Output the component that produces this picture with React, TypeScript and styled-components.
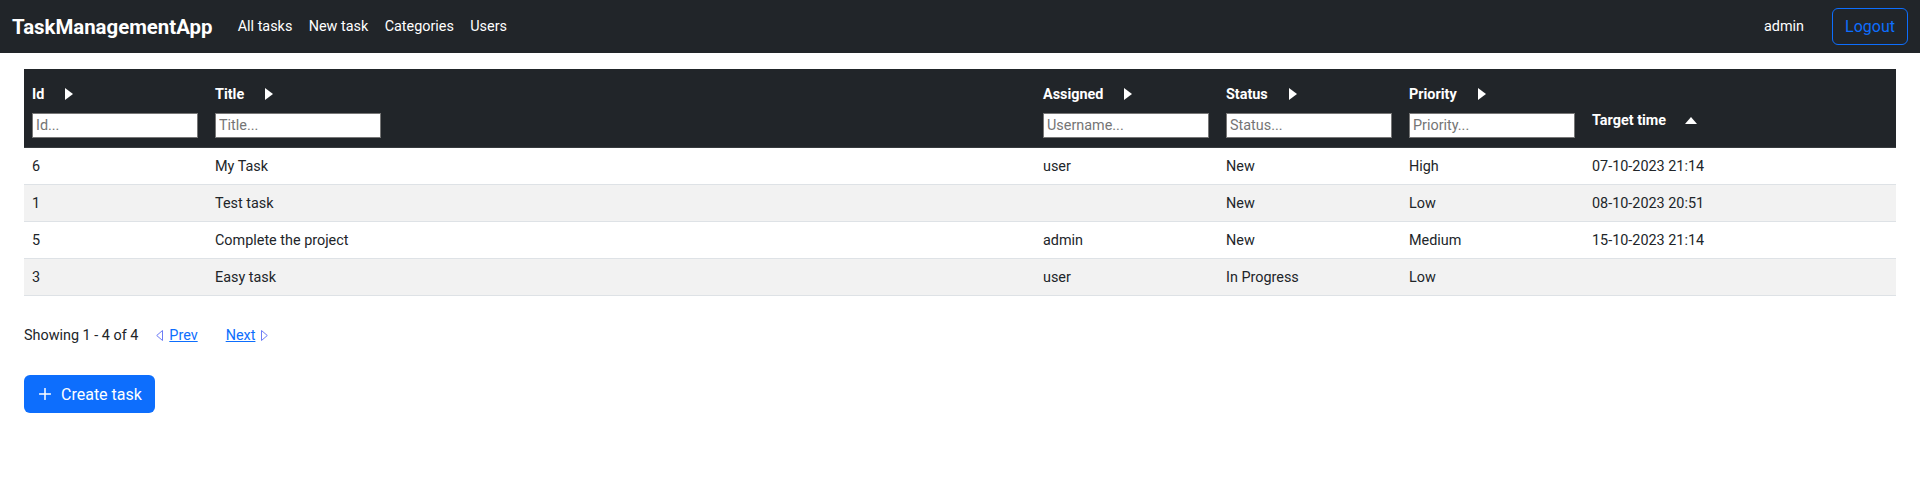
import React from "react";
import styled, { createGlobalStyle } from "styled-components";

const GlobalStyle = createGlobalStyle`
  html, body { margin: 0; padding: 0; background: #fff; }
  body {
    font-family: Roboto, "Noto Sans", "Liberation Sans", sans-serif;
    font-size: 14.4px;
    color: #212529;
  }
  * { box-sizing: border-box; }
`;

const NavBar = styled.nav`
  height: 53px;
  background: #212529;
  display: flex;
  align-items: center;
  padding: 0 12px;
`;

const Brand = styled.a`
  color: #fff;
  font-size: 20.4px;
  font-weight: 700;
  margin-right: 17px;
  text-decoration: none;
`;

const NavLinks = styled.div`
  display: flex;
  align-items: center;
`;

const NavLink = styled.a`
  color: #fff;
  padding: 0 8.2px;
  font-size: 14.4px;
  text-decoration: none;
`;

const NavRight = styled.div`
  margin-left: auto;
  display: flex;
  align-items: center;
  gap: 28px;
`;

const UserName = styled.span`
  color: #fff;
  font-size: 14.4px;
`;

const OutlineButton = styled.button`
  height: 37px;
  width: 76px;
  border: 1px solid #0d6efd;
  border-radius: 6px;
  background: transparent;
  color: #0d6efd;
  font-family: inherit;
  font-size: 16px;
  padding: 0;
`;

const Main = styled.main`
  padding: 16px 24px;
`;

const Table = styled.table`
  width: 100%;
  border-collapse: collapse;
  table-layout: fixed;
`;

const HeadRow = styled.tr`
  background: #212529;
  border-bottom: 1px solid #373b3e;
`;

const Th = styled.th<{ $w?: number; $plain?: boolean }>`
  width: ${(p) => (p.$w ? `${p.$w}px` : "auto")};
  padding: 13px 8px 9px;
  text-align: left;
  vertical-align: ${(p) => (p.$plain ? "bottom" : "top")};
  color: #fff;
`;

const HeadLabel = styled.div<{ $plain?: boolean }>`
  display: flex;
  align-items: center;
  height: 24px;
  font-size: 14.4px;
  font-weight: 700;
  margin-bottom: ${(p) => (p.$plain ? "6px" : "7px")};
  gap: 17px;
`;

const IconBox = styled.span`
  width: 16px;
  height: 16px;
  display: inline-flex;
  align-items: center;
  justify-content: center;
`;

const FilterInput = styled.input`
  display: block;
  width: 166px;
  height: 25px;
  border: 1px solid #767676;
  border-radius: 0;
  padding: 1px 3px;
  font-family: inherit;
  font-size: 14.4px;
  color: #212529;
  background: #fff;
  &::placeholder { color: #757575; }
`;

const Row = styled.tr<{ $striped?: boolean }>`
  background: ${(p) => (p.$striped ? "#f2f2f2" : "#fff")};
  border-bottom: 1px solid #dee2e6;
`;

const Td = styled.td`
  height: 37px;
  padding: 0 8px;
  font-size: 14.4px;
  color: #212529;
  vertical-align: middle;
`;

const Pager = styled.div`
  display: flex;
  align-items: center;
  margin-top: 28px;
  height: 22px;
  font-size: 14.4px;
`;

const PageLink = styled.a<{ $gap: number }>`
  display: inline-flex;
  align-items: center;
  gap: 6px;
  margin-left: ${(p) => p.$gap}px;
  color: #0d6efd;
  cursor: pointer;
`;

const LinkText = styled.span`
  text-decoration: underline;
`;

const PrimaryButton = styled.button`
  margin-top: 29px;
  height: 38px;
  display: inline-flex;
  align-items: center;
  gap: 10px;
  padding: 0 13px 0 15px;
  border: none;
  border-radius: 6px;
  background: #0d6efd;
  color: #fff;
  font-family: inherit;
  font-size: 16px;
`;

const CaretRight = () => (
  <IconBox>
    <svg width="8" height="12" viewBox="0 0 8 12">
      <polygon points="0,0 8,6 0,12" fill="#fff" />
    </svg>
  </IconBox>
);

const CaretUp = () => (
  <IconBox>
    <svg width="12" height="7" viewBox="0 0 12 7">
      <polygon points="0,7 6,0 12,7" fill="#fff" />
    </svg>
  </IconBox>
);

const OutlineLeft = () => (
  <svg width="7" height="11" viewBox="0 0 7 11">
    <polygon points="6.5,0.5 0.7,5.5 6.5,10.5" fill="none" stroke="#6d7cf5" strokeWidth="1" />
  </svg>
);

const OutlineRight = () => (
  <svg width="7" height="11" viewBox="0 0 7 11">
    <polygon points="0.5,0.5 6.3,5.5 0.5,10.5" fill="none" stroke="#6d7cf5" strokeWidth="1" />
  </svg>
);

const PlusIcon = () => (
  <svg width="12" height="12" viewBox="0 0 12 12">
    <path d="M6 0.5V11.5M0.5 6H11.5" stroke="#fff" strokeWidth="1.5" strokeLinecap="round" />
  </svg>
);

type Task = { id: number; title: string; assigned: string; status: string; priority: string; target: string };

const tasks: Task[] = [
  { id: 6, title: "My Task", assigned: "user", status: "New", priority: "High", target: "07-10-2023 21:14" },
  { id: 1, title: "Test task", assigned: "", status: "New", priority: "Low", target: "08-10-2023 20:51" },
  { id: 5, title: "Complete the project", assigned: "admin", status: "New", priority: "Medium", target: "15-10-2023 21:14" },
  { id: 3, title: "Easy task", assigned: "user", status: "In Progress", priority: "Low", target: "" },
];

const filters = [
  { label: "Id", placeholder: "Id...", w: 183 },
  { label: "Title", placeholder: "Title...", w: 0 },
  { label: "Assigned", placeholder: "Username...", w: 183 },
  { label: "Status", placeholder: "Status...", w: 183 },
  { label: "Priority", placeholder: "Priority...", w: 183 },
];

export default function App() {
  return (
    <>
      <GlobalStyle />
      <NavBar>
        <Brand>TaskManagementApp</Brand>
        <NavLinks>
          <NavLink>All tasks</NavLink>
          <NavLink>New task</NavLink>
          <NavLink>Categories</NavLink>
          <NavLink>Users</NavLink>
        </NavLinks>
        <NavRight>
          <UserName>admin</UserName>
          <OutlineButton>Logout</OutlineButton>
        </NavRight>
      </NavBar>
      <Main>
        <Table>
          <thead>
            <HeadRow>
              {filters.map((f) => (
                <Th key={f.label} $w={f.w || undefined}>
                  <HeadLabel>
                    <span>{f.label}</span>
                    <CaretRight />
                  </HeadLabel>
                  <FilterInput placeholder={f.placeholder} />
                </Th>
              ))}
              <Th $w={312} $plain>
                <HeadLabel $plain>
                  <span>Target time</span>
                  <CaretUp />
                </HeadLabel>
              </Th>
            </HeadRow>
          </thead>
          <tbody>
            {tasks.map((t, i) => (
              <Row key={t.id} $striped={i % 2 === 1}>
                <Td>{t.id}</Td>
                <Td>{t.title}</Td>
                <Td>{t.assigned}</Td>
                <Td>{t.status}</Td>
                <Td>{t.priority}</Td>
                <Td>{t.target}</Td>
              </Row>
            ))}
          </tbody>
        </Table>
        <Pager>
          <span>Showing 1 - 4 of 4</span>
          <PageLink $gap={18}>
            <OutlineLeft />
            <LinkText>Prev</LinkText>
          </PageLink>
          <PageLink $gap={28}>
            <LinkText>Next</LinkText>
            <OutlineRight />
          </PageLink>
        </Pager>
        <PrimaryButton>
          <PlusIcon />
          Create task
        </PrimaryButton>
      </Main>
    </>
  );
}
